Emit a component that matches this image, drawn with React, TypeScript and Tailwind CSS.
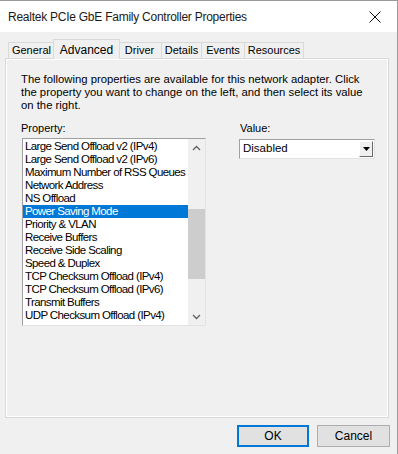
import React from 'react';

const tabs = [
  { label: 'General', w: 47 },
  { label: 'Advanced', w: 63 },
  { label: 'Driver', w: 45 },
  { label: 'Details', w: 41 },
  { label: 'Events', w: 44 },
  { label: 'Resources', w: 60 },
];

const properties = [
  'Large Send Offload v2 (IPv4)',
  'Large Send Offload v2 (IPv6)',
  'Maximum Number of RSS Queues',
  'Network Address',
  'NS Offload',
  'Power Saving Mode',
  'Priority & VLAN',
  'Receive Buffers',
  'Receive Side Scaling',
  'Speed & Duplex',
  'TCP Checksum Offload (IPv4)',
  'TCP Checksum Offload (IPv6)',
  'Transmit Buffers',
  'UDP Checksum Offload (IPv4)',
];

function Chevron({ down }: { down?: boolean }) {
  return (
    <svg width="9" height="6" viewBox="0 0 9 6" className={down ? 'rotate-180' : ''}>
      <path d="M1 5 L4.5 1.5 L8 5" fill="none" stroke="#606060" strokeWidth="1.3" />
    </svg>
  );
}

export default function App() {
  return (
    <div
      className="w-[398px] h-[454px] bg-[#f0f0f0] border-t border-r border-[#9a9a9a] overflow-hidden text-[11px] text-black flex flex-col"
      style={{ fontFamily: '"Liberation Sans", Arial, sans-serif' }}
    >
      {/* Title bar */}
      <div className="h-[31px] bg-white flex items-center justify-between pl-[8px] pr-[16px] shrink-0">
        <span className="text-[12px] tracking-[-0.25px] text-[#1a1a1a]">
          Realtek PCIe GbE Family Controller Properties
        </span>
        <svg width="12" height="12" viewBox="0 0 12 12">
          <path d="M0.5 0.5 L11.5 11.5 M11.5 0.5 L0.5 11.5" stroke="#111" strokeWidth="1" />
        </svg>
      </div>

      {/* Tabs */}
      <div className="flex items-end h-[26px] pl-[8px] shrink-0">
        {tabs.map((t) =>
          t.label === 'Advanced' ? (
            <div
              key={t.label}
              className="relative z-10 -mx-[2px] h-[20px] -mb-[1px] bg-[#f0f0f0] border border-b-0 border-[#d9d9d9] flex items-center justify-center text-[12px]"
              style={{ width: t.w + 4 }}
            >
              {t.label}
            </div>
          ) : (
            <div
              key={t.label}
              className="h-[16px] border border-b-0 border-[#d9d9d9] -ml-px first:ml-0 flex items-center justify-center bg-[#f0f0f0]"
              style={{ width: t.w }}
            >
              {t.label}
            </div>
          )
        )}
      </div>

      {/* Panel */}
      <div className="ml-[5px] mr-[8px] h-[360px] border border-[#d9d9d9] shrink-0">
        <div className="h-full border border-white px-[14px] pt-[13px]">
          <p className="leading-[13px] text-[11.3px]">
            The following properties are available for this network adapter. Click
            <br />
            the property you want to change on the left, and then select its value
            <br />
            on the right.
          </p>

          <div className="flex mt-[10px]">
            {/* Property list */}
            <div className="flex flex-col">
              <span className="leading-[13px]">Property:</span>
              <div className="mt-[3px] ml-px w-[184px] h-[188px] border-t border-l border-[#a0a0a0] border-b border-r border-b-[#e3e3e3] border-r-[#e3e3e3] bg-white flex">
                <div className="flex-1 pt-px overflow-hidden">
                  {properties.map((p) => (
                    <div
                      key={p}
                      className={`h-[13px] leading-[13px] pl-[2px] whitespace-nowrap text-[11.5px] tracking-[-0.6px] ${
                        p === 'Power Saving Mode' ? 'bg-[#0078d7] text-white' : ''
                      }`}
                    >
                      {p}
                    </div>
                  ))}
                </div>
                <div className="w-[17px] bg-[#f0f0f0] flex flex-col items-center">
                  <div className="h-[17px] flex items-center justify-center">
                    <Chevron />
                  </div>
                  <div className="flex-1 w-full">
                    <div className="mt-[53px] h-[70px] w-full bg-[#cdcdcd]" />
                  </div>
                  <div className="h-[17px] flex items-center justify-center">
                    <Chevron down />
                  </div>
                </div>
              </div>
            </div>

            {/* Value */}
            <div className="flex flex-col ml-[33px]">
              <span className="leading-[13px] pl-px">Value:</span>
              <div className="mt-[4px] w-[136px] h-[20px] border-t border-l border-[#a0a0a0] border-b border-r border-b-[#e3e3e3] border-r-[#e3e3e3] bg-white flex items-center justify-between pl-[3px] pr-px">
                <span className="text-[11.5px]">Disabled</span>
                <div className="w-[14px] h-[16px] bg-[#f0f0f0] border-t border-l border-white border-b border-r border-b-[#696969] border-r-[#696969] flex items-center justify-center">
                  <svg width="7" height="4" viewBox="0 0 7 4">
                    <path d="M0 0 H7 L3.5 4 Z" fill="#000" />
                  </svg>
                </div>
              </div>
            </div>
          </div>
        </div>
      </div>

      {/* Buttons */}
      <div className="flex justify-end gap-[8px] pr-[7px] mt-[7px]">
        <button className="w-[72px] h-[22px] bg-[#e1e1e1] border-2 border-[#0078d7] text-[12px] flex items-center justify-center">
          OK
        </button>
        <button className="w-[73px] h-[22px] bg-[#e1e1e1] border border-[#adadad] text-[12px] flex items-center justify-center">
          Cancel
        </button>
      </div>
    </div>
  );
}
